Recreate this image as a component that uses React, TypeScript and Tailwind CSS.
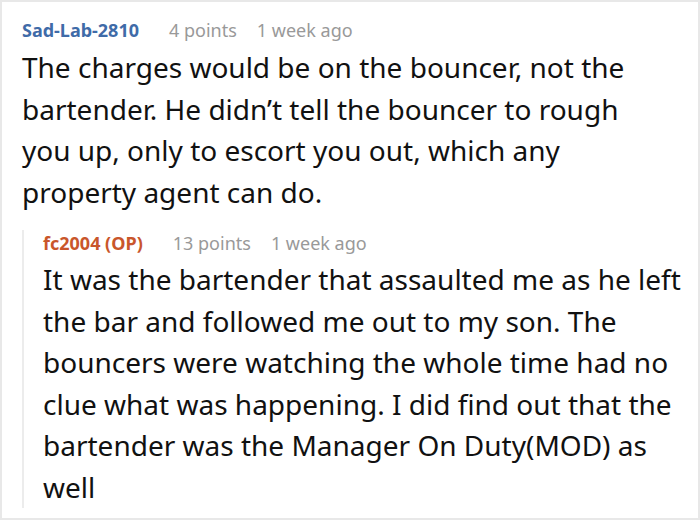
export default function App() {
  return (
    <div className="w-[700px] h-[520px] bg-white border-2 border-[#e8e8e8] font-['Noto_Sans',sans-serif] overflow-hidden">
      <div className="pl-[20px] pt-[15px]">
        <div className="flex items-baseline text-[18px] leading-[26px]">
          <span className="font-bold text-[#3f6ba8]">Sad-Lab-2810</span>
          <span className="ml-[30px] text-[#999]">4 points</span>
          <span className="ml-[20px] text-[#999]">1 week ago</span>
        </div>
        <p className="mt-[4px] text-[28px] leading-[41.5px] text-[#111] w-[640px]">
          The charges would be on the bouncer, not the bartender. He didn’t tell the bouncer to rough you up, only to escort you out, which any property agent can do.
        </p>
        <div className="mt-[17px] border-l-2 border-[#ececec] pl-[19px]">
          <div className="flex items-baseline text-[18px] leading-[26px]">
            <span className="font-bold text-[#c9562b]">fc2004 (OP)</span>
            <span className="ml-[30px] text-[#999]">13 points</span>
            <span className="ml-[20px] text-[#999]">1 week ago</span>
          </div>
          <p className="mt-[3px] mb-[-8px] text-[28px] leading-[41.5px] text-[#111] pr-[4px]">
            It was the bartender that assaulted me as he left the bar and followed me out to my son. The bouncers were watching the whole time had no clue what was happening. I did find out that the bartender was the Manager On Duty(MOD) as well
          </p>
        </div>
      </div>
    </div>
  );
}
